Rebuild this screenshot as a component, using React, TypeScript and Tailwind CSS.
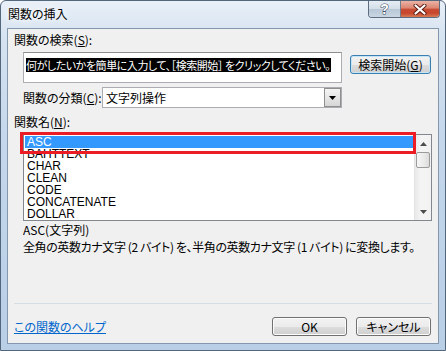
import React from 'react';

const ITEMS = ['ASC', 'BAHTTEXT', 'CHAR', 'CLEAN', 'CODE', 'CONCATENATE', 'DOLLAR'];

const VistaButton: React.FC<{ label: React.ReactNode; className?: string; isDefault?: boolean }> = ({ label, className = '', isDefault }) => (
    <div
        className={`flex items-center justify-center rounded-[3px] border ${
            isDefault ? 'border-[#3c7fb1] shadow-[inset_0_0_0_1px_#c4e5f6]' : 'border-[#707070] shadow-[inset_0_0_0_1px_#fcfcfc]'
        } bg-[linear-gradient(180deg,#f2f2f2_0%,#ebebeb_50%,#dddddd_51%,#cfcfcf_100%)] text-[12px] leading-none text-black ${className}`}
    >
        {label}
    </div>
);

const App: React.FC = () => {
    return (
        <div className="w-[446px] h-[351px] [font-family:'Noto_Sans_CJK_JP',sans-serif] [font-feature-settings:'palt'] text-black">
            {/* window frame */}
            <div className="w-full h-full flex flex-col rounded-t-[6px] border border-[#52667c] bg-[linear-gradient(180deg,#e9f0f8_0%,#d6e3f1_10%,#c4d7eb_40%,#b9cfe6_100%)]">
                {/* title bar */}
                <div className="h-[27px] flex items-start justify-between pl-[7px] pr-[5px]">
                    <div className="mt-[6px] text-[12px] leading-[14px] [text-shadow:0_0_5px_#ffffff,0_0_8px_#ffffff]">関数の挿入</div>
                    <div className="flex h-[17px] rounded-b-[4px] border border-t-0 border-[#5d6c7e] overflow-hidden">
                        <div className="w-[32px] flex items-center justify-center border-r border-[#6f7f90] bg-[linear-gradient(180deg,#e6edf4_0%,#d3dee8_50%,#b8c7d6_51%,#c9d6e2_100%)]">
                            <span className="text-[14px] leading-none font-bold text-white [-webkit-text-stroke:1px_#3c4b5c] [paint-order:stroke_fill] [font-family:'Liberation_Sans',sans-serif]">?</span>
                        </div>
                        <div className="w-[38px] flex items-center justify-center bg-[linear-gradient(180deg,#eab3a6_0%,#dc8571_45%,#c84d34_50%,#c7462c_75%,#d87a55_100%)]">
                            <svg width="14" height="11" viewBox="0 0 14 11">
                                <path d="M2.5 1.5 L11.5 9.5 M11.5 1.5 L2.5 9.5" stroke="#5a1d12" strokeWidth="4" strokeLinecap="round" />
                                <path d="M2.5 1.5 L11.5 9.5 M11.5 1.5 L2.5 9.5" stroke="#ffffff" strokeWidth="2.2" strokeLinecap="round" />
                            </svg>
                        </div>
                    </div>
                </div>

                {/* client area */}
                <div className="mx-[6px] mb-[6px] flex-1 flex flex-col border border-[#8497ad] bg-[#f0f0f0] text-[12px]">
                    <div className="ml-[6px] mt-[4px] leading-[14px]">
                        関数の検索(<span className="underline">S</span>):
                    </div>

                    <div className="flex items-start mt-[5px]">
                        <div className="ml-[15px] w-[319px] h-[31px] border border-[#abadb3] border-t-[#8e8f8f] bg-white pl-[2px] pt-[3px] overflow-hidden">
                            <span className="inline-block whitespace-nowrap bg-black text-white text-[11px] leading-[14px] tracking-[-0.45px] pr-[1px]">
                                何がしたいかを簡単に入力して、［検索開始］ をクリックしてください。
                            </span>
                        </div>
                        <VistaButton
                            isDefault
                            className="ml-[8px] mt-[3px] w-[81px] h-[19px]"
                            label={
                                <span>
                                    検索開始(<span className="underline">G</span>)
                                </span>
                            }
                        />
                    </div>

                    <div className="flex items-center mt-[4px]">
                        <div className="ml-[15px] w-[79px] leading-[14px]">
                            関数の分類(<span className="underline">C</span>):
                        </div>
                        <div className="w-[240px] h-[21px] flex items-center border border-[#abadb3] bg-white">
                            <div className="flex-1 pl-[3px] leading-[14px]">文字列操作</div>
                            <div className="w-[17px] h-[19px] flex items-center justify-center border border-[#8f8f8f] bg-[linear-gradient(180deg,#f4f4f4_0%,#e6e6e6_50%,#d6d6d6_100%)]">
                                <svg width="7" height="4" viewBox="0 0 7 4">
                                    <path d="M0 0 H7 L3.5 4 Z" fill="#000" />
                                </svg>
                            </div>
                        </div>
                    </div>

                    <div className="ml-[6px] mt-[7px] leading-[14px]">
                        関数名(<span className="underline">N</span>):
                    </div>

                    {/* function list */}
                    <div className="relative ml-[15px] mt-[5px] w-[409px] h-[87px] flex border border-[#828790] bg-white">
                        <div className="flex-1 pt-[1px] pl-[1px] [font-family:'Liberation_Sans',sans-serif] overflow-hidden">
                            {ITEMS.map((item, i) => (
                                <div
                                    key={item}
                                    className={`h-[12px] leading-[12px] pl-[2px] text-[12px] ${i === 0 ? 'bg-[#3399ff] text-white' : ''}`}
                                >
                                    {item}
                                </div>
                            ))}
                        </div>
                        <div className="w-[17px] flex flex-col items-center border-l border-[#e3e3e3] bg-[linear-gradient(90deg,#e9e9e9_0%,#f5f5f5_40%,#f2f2f2_100%)]">
                            <div className="h-[17px] flex items-center justify-center">
                                <svg width="7" height="4" viewBox="0 0 7 4">
                                    <path d="M3.5 0 L7 4 H0 Z" fill="#4d4d4d" />
                                </svg>
                            </div>
                            <div className="w-[14px] h-[16px] rounded-[2px] border border-[#9b9b9b] bg-[linear-gradient(90deg,#f6f6f6_0%,#ececec_50%,#dcdcdc_100%)]" />
                            <div className="flex-1" />
                            <div className="h-[17px] flex items-center justify-center">
                                <svg width="7" height="4" viewBox="0 0 7 4">
                                    <path d="M0 0 H7 L3.5 4 Z" fill="#4d4d4d" />
                                </svg>
                            </div>
                        </div>
                        {/* red highlight annotation */}
                        <div className="absolute left-[-4px] top-[-3px] w-[396px] h-[22px] border-[3px] border-[#ec1c24]" />
                    </div>

                    <div className="ml-[15px] leading-[17px]">
                        <div>ASC(文字列)</div>
                        <div className="whitespace-nowrap tracking-[-0.4px]">全角の英数カナ文字 (2 バイト) を、半角の英数カナ文字 (1 バイト) に変換します。</div>
                    </div>

                    <div className="flex-1" />
                    <div className="mx-[6px] h-px bg-[#d5dde5]" />

                    <div className="flex items-center mt-[13px] mb-[7px]">
                        <div className="ml-[6px] flex-1 text-[#0066cc] underline leading-[14px]">この関数のヘルプ</div>
                        <VistaButton className="w-[75px] h-[19px]" label="OK" />
                        <VistaButton className="ml-[9px] mr-[7px] w-[75px] h-[19px]" label="キャンセル" />
                    </div>
                </div>
            </div>
        </div>
    );
};

export default App;
